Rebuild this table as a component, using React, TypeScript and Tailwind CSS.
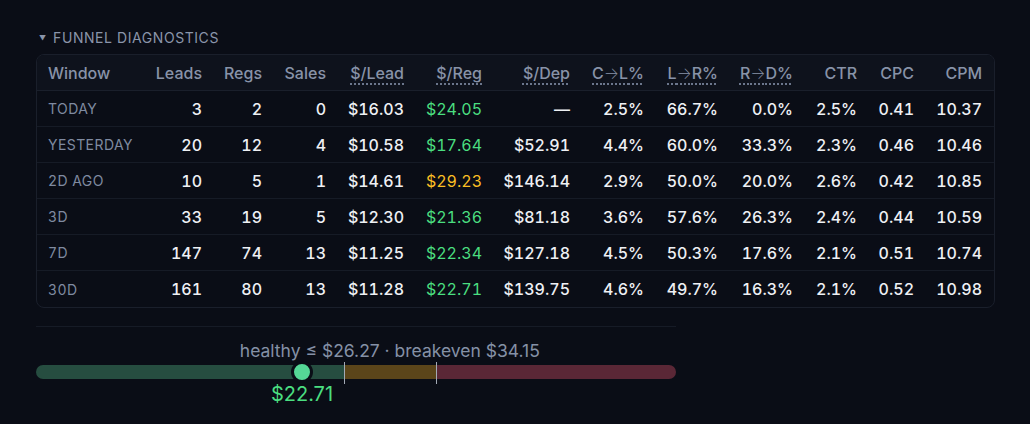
import React from "react";

type Row = {
  w: string;
  leads: string;
  regs: string;
  sales: string;
  lead: string;
  reg: string;
  regTone: "green" | "amber";
  dep: string;
  cl: string;
  lr: string;
  rd: string;
  ctr: string;
  cpc: string;
  cpm: string;
};

const rows: Row[] = [
  { w: "TODAY", leads: "3", regs: "2", sales: "0", lead: "$16.03", reg: "$24.05", regTone: "green", dep: "—", cl: "2.5%", lr: "66.7%", rd: "0.0%", ctr: "2.5%", cpc: "0.41", cpm: "10.37" },
  { w: "YESTERDAY", leads: "20", regs: "12", sales: "4", lead: "$10.58", reg: "$17.64", regTone: "green", dep: "$52.91", cl: "4.4%", lr: "60.0%", rd: "33.3%", ctr: "2.3%", cpc: "0.46", cpm: "10.46" },
  { w: "2D AGO", leads: "10", regs: "5", sales: "1", lead: "$14.61", reg: "$29.23", regTone: "amber", dep: "$146.14", cl: "2.9%", lr: "50.0%", rd: "20.0%", ctr: "2.6%", cpc: "0.42", cpm: "10.85" },
  { w: "3D", leads: "33", regs: "19", sales: "5", lead: "$12.30", reg: "$21.36", regTone: "green", dep: "$81.18", cl: "3.6%", lr: "57.6%", rd: "26.3%", ctr: "2.4%", cpc: "0.44", cpm: "10.59" },
  { w: "7D", leads: "147", regs: "74", sales: "13", lead: "$11.25", reg: "$22.34", regTone: "green", dep: "$127.18", cl: "4.5%", lr: "50.3%", rd: "17.6%", ctr: "2.1%", cpc: "0.51", cpm: "10.74" },
  { w: "30D", leads: "161", regs: "80", sales: "13", lead: "$11.28", reg: "$22.71", regTone: "green", dep: "$139.75", cl: "4.6%", lr: "49.7%", rd: "16.3%", ctr: "2.1%", cpc: "0.52", cpm: "10.98" },
];

const GRID =
  "grid grid-cols-[113px_64px_60px_64px_78px_78px_88px_74px_74px_75px_64px_57px_68px]";

function Arrow({ a, b }: { a: string; b: string }) {
  return (
    <>
      {a}
      <span className="font-extralight">→</span>
      {b}%
    </>
  );
}

const headers: { label: React.ReactNode; key: string; dotted?: boolean }[] = [
  { key: "leads", label: "Leads" },
  { key: "regs", label: "Regs" },
  { key: "sales", label: "Sales" },
  { key: "lead", label: "$/Lead", dotted: true },
  { key: "reg", label: "$/Reg", dotted: true },
  { key: "dep", label: "$/Dep", dotted: true },
  { key: "cl", label: <Arrow a="C" b="L" />, dotted: true },
  { key: "lr", label: <Arrow a="L" b="R" />, dotted: true },
  { key: "rd", label: <Arrow a="R" b="D" />, dotted: true },
  { key: "ctr", label: "CTR" },
  { key: "cpc", label: "CPC" },
  { key: "cpm", label: "CPM" },
];

export default function App() {
  const healthy = 26.27;
  const breakeven = 34.15;
  const value = 22.71;
  const max = breakeven * 1.6;
  const hPct = (healthy / max) * 100;
  const bPct = (breakeven / max) * 100;
  const vPct = (value / max) * 100;

  return (
    <div
      className="w-[1030px] h-[424px] bg-[#0a0d16] text-[#eef0f4] overflow-hidden"
      style={{ fontFamily: "Inter, 'Noto Sans', sans-serif" }}
    >
      <div className="pl-[36px] pt-[29px]">
        <div className="flex items-center gap-[7px] pl-[3px] h-[18px] text-[#8a95aa]">
          <span className="text-[7px] leading-none">▼</span>
          <span className="text-[14px] tracking-[0.04em] leading-none">FUNNEL DIAGNOSTICS</span>
        </div>

        <div className="mt-[7px] w-[959px] rounded-[8px] border border-[#1a1f2b] overflow-hidden">
          <div className={`${GRID} h-[36px] items-center bg-[#0e121c] border-b border-[#1a1f2b] text-[16px] font-medium text-[#8893a8]`}>
            <div className="pl-[11px]">Window</div>
            {headers.map((h) => (
              <div key={h.key} className="text-right pr-[12px] whitespace-nowrap">
                <span
                  className={
                    h.dotted
                      ? "underline decoration-dotted decoration-[#6b768c] decoration-[2px] underline-offset-[5px]"
                      : ""
                  }
                >
                  {h.label}
                </span>
              </div>
            ))}
          </div>
          {rows.map((r, i) => (
            <div
              key={r.w}
              className={`${GRID} h-[36px] items-center text-[16px] font-medium tabular-nums whitespace-nowrap ${
                i < rows.length - 1 ? "border-b border-[#161b26]" : ""
              }`}
            >
              <div className="pl-[11px] text-[14px] font-normal tracking-[0.03em] text-[#7f8aa0]">{r.w}</div>
              <div className="text-right pr-[12px]">{r.leads}</div>
              <div className="text-right pr-[12px]">{r.regs}</div>
              <div className="text-right pr-[12px]">{r.sales}</div>
              <div className="text-right pr-[12px]">{r.lead}</div>
              <div
                className={`text-right pr-[12px] font-normal ${
                  r.regTone === "green" ? "text-[#4ade80]" : "text-[#fbbf24]"
                }`}
              >
                {r.reg}
              </div>
              <div className="text-right pr-[12px]">{r.dep}</div>
              <div className="text-right pr-[12px]">{r.cl}</div>
              <div className="text-right pr-[12px]">{r.lr}</div>
              <div className="text-right pr-[12px]">{r.rd}</div>
              <div className="text-right pr-[12px]">{r.ctr}</div>
              <div className="text-right pr-[12px]">{r.cpc}</div>
              <div className="text-right pr-[12px]">{r.cpm}</div>
            </div>
          ))}
        </div>

        <div className="mt-[18px] w-[640px] border-t border-[#161b26]">
          <div className="relative h-[86px]">
            <div
              className="absolute top-[11px] -translate-x-1/2 whitespace-nowrap text-[17.5px] text-[#8591a6]"
              style={{ left: `${(hPct + bPct) / 2}%` }}
            >
              healthy ≤ $26.27 · breakeven $34.15
            </div>
            <div className="absolute top-[38px] left-0 right-0 h-[14px] rounded-full overflow-hidden flex">
              <div className="h-full bg-[#264d40]" style={{ width: `${hPct}%` }} />
              <div className="h-full bg-[#5b451a]" style={{ width: `${bPct - hPct}%` }} />
              <div className="h-full flex-1 bg-[#5a2736]" />
            </div>
            <div
              className="absolute top-[35px] h-[22px] w-px bg-[#a3a9b5]"
              style={{ left: `${hPct}%` }}
            />
            <div
              className="absolute top-[35px] h-[22px] w-px bg-[#a3a9b5]"
              style={{ left: `${bPct}%` }}
            />
            <div
              className="absolute top-[34px] h-[22px] w-[22px] -translate-x-1/2 rounded-full bg-[#55d796] border-[3px] border-[#0a0d16]"
              style={{ left: `${vPct}%` }}
            />
            <div
              className="absolute top-[52px] -translate-x-1/2 whitespace-nowrap text-[20px] text-[#4ade80]"
              style={{ left: `${vPct}%` }}
            >
              $22.71
            </div>
          </div>
        </div>
      </div>
    </div>
  );
}
